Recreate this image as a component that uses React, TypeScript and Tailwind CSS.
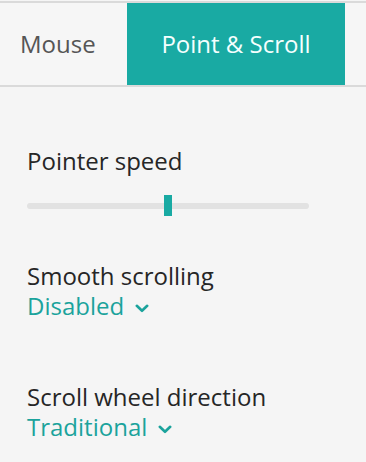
const font = { fontFamily: '"Segoe UI", "Open Sans", "Noto Sans", sans-serif' };

const Chevron = () => (
  <svg width="14" height="9" viewBox="0 0 14 9" className="mt-[4px]">
    <polyline points="1.8,1.8 7,6.8 12.2,1.8" fill="none" stroke="currentColor" strokeWidth="2.6" strokeLinecap="round" strokeLinejoin="round" />
  </svg>
);

const Dropdown = ({ label, value }: { label: string; value: string }) => (
  <div className="flex flex-col">
    <span className="text-[24px] leading-[30px] text-[#262626]">{label}</span>
    <button className="flex items-center gap-[11px] text-[24px] leading-[30px] text-[#1ba39c]">
      {value}
      <Chevron />
    </button>
  </div>
);

export default function App() {
  return (
    <div className="w-[366px] h-[462px] bg-[#f5f5f5] pt-px" style={font}>
      {/* tabs */}
      <div className="flex h-[86px] border-y-2 border-[#dadada] bg-[#f6f6f6]">
        <button className="flex items-center px-[20px] w-[127px] text-[24px] text-[#555555]">
          Mouse
        </button>
        <button className="flex items-center justify-center w-[218px] bg-[#19aaa3] text-[24px] text-[#f4fffe]">
          Point &amp; Scroll
        </button>
      </div>

      <div className="flex flex-col px-[27px] pt-[59px]">
        <span className="text-[24px] leading-[30px] text-[#262626]">Pointer speed</span>

        {/* slider */}
        <div className="relative w-[282px] h-[22px] mt-[19px] flex items-center">
          <div className="w-full h-[6px] rounded-full bg-[#e2e2e2]" />
          <div className="absolute left-[137px] top-0 w-[8px] h-[21px] bg-[#19aaa3]" />
        </div>

        <div className="mt-[44px]">
          <Dropdown label="Smooth scrolling" value="Disabled" />
        </div>
        <div className="mt-[61px]">
          <Dropdown label="Scroll wheel direction" value="Traditional" />
        </div>
      </div>
    </div>
  );
}
